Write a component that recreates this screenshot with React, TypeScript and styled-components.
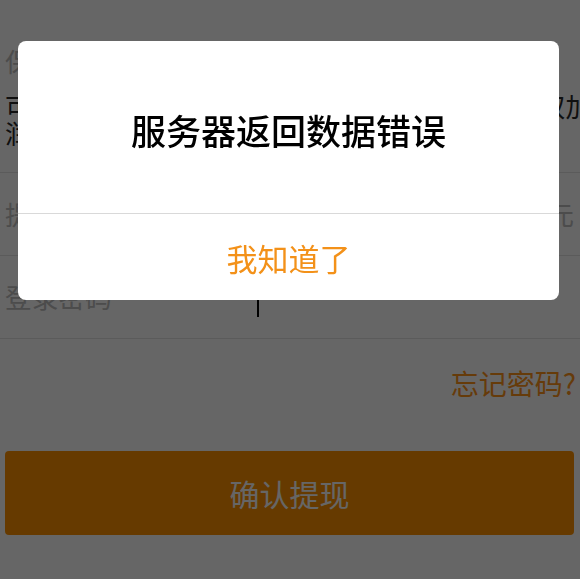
import React from 'react'
import styled, { createGlobalStyle } from 'styled-components'

const GlobalStyle = createGlobalStyle`
  html, body {
    margin: 0;
    padding: 0;
    background: #fff;
  }
  body {
    font-family: "Noto Sans CJK SC", "Noto Sans", sans-serif;
    -webkit-font-smoothing: antialiased;
  }
`

const App = () => {
  return (
    <>
      <GlobalStyle />
      <Page>
        <Notice>
          <Label>保证金</Label>
          <NoticeText>
            <Line>可提现金额为账户余额扣除冻结保证金，收益双加</Line>
            <Line>润到账后方可提现，请于工作日内申请提现。</Line>
          </NoticeText>
        </Notice>
        <Row>
          <Label>提现金额</Label>
          <Field>
            <Placeholder>请输入提现金额</Placeholder>
          </Field>
          <Unit>元</Unit>
        </Row>
        <Row>
          <Label>登录密码</Label>
          <Field>
            <Caret />
          </Field>
        </Row>
        <Forgot>忘记密码?</Forgot>
        <Submit>确认提现</Submit>
      </Page>

      <Overlay>
        <Dialog>
          <DialogBody>服务器返回数据错误</DialogBody>
          <DialogButton>我知道了</DialogButton>
        </Dialog>
      </Overlay>
    </>
  )
}

export default App

const Page = styled.div`
  min-height: 579px;
  padding: 0 6px 0 5px;
  box-sizing: border-box;
  font-size: 26.7px;
  color: #333;
`

const Notice = styled.div`
  padding: 44px 0 26px;
  border-bottom: 1px solid #e3e3e3;
  margin: 0 -6px 0 -5px;
  padding-left: 5px;
  overflow: hidden;
`

const Label = styled.div`
  width: 252px;
  flex-shrink: 0;
  line-height: 34px;
  color: #bdbdbd;
  margin-bottom: 14px;
`

const NoticeText = styled.div`
  color: #2a2a2a;
  line-height: 27px;
`

const Line = styled.div`
  white-space: nowrap;
`

const Row = styled.div`
  display: flex;
  align-items: center;
  height: 82px;
  border-bottom: 1px solid #e3e3e3;
  margin: 0 -6px 0 -5px;
  padding: 0 6px 0 5px;

  ${Label} {
    margin-bottom: 0;
  }
`

const Field = styled.div`
  flex: 1;
  display: flex;
  align-items: center;
  height: 100%;
`

const Placeholder = styled.span`
  color: #bdbdbd;
`

const Caret = styled.span`
  display: block;
  width: 2px;
  height: 34px;
  margin-top: 6px;
  background: #000;
`

const Unit = styled.span`
  color: #bdbdbd;
  line-height: 34px;
`

const Forgot = styled.div`
  margin-top: 27px;
  text-align: right;
  line-height: 34px;
  font-size: 28px;
  margin-right: -2px;
  color: #ff9419;
`

const Submit = styled.button`
  display: block;
  width: 100%;
  height: 84px;
  margin-top: 51px;
  border: none;
  border-radius: 4px;
  background: #ff9200;
  color: #fff;
  font-family: inherit;
  font-size: 30px;
  padding: 0;
`

const Overlay = styled.div`
  position: fixed;
  inset: 0;
  background: rgba(0, 0, 0, 0.6);
  display: flex;
  justify-content: center;
  align-items: flex-start;
  padding: 41px 3px 0 0;
`

const Dialog = styled.div`
  width: 541px;
  background: #fff;
  border-radius: 8px;
  overflow: hidden;
`

const DialogBody = styled.div`
  height: 173px;
  display: flex;
  align-items: center;
  justify-content: center;
  padding-top: 4px;
  box-sizing: border-box;
  font-size: 35px;
  font-weight: 500;
  color: #000;
  border-bottom: 1px solid #d9d9d9;
`

const DialogButton = styled.div`
  height: 86px;
  display: flex;
  align-items: center;
  justify-content: center;
  font-size: 31px;
  color: #f39119;
`
